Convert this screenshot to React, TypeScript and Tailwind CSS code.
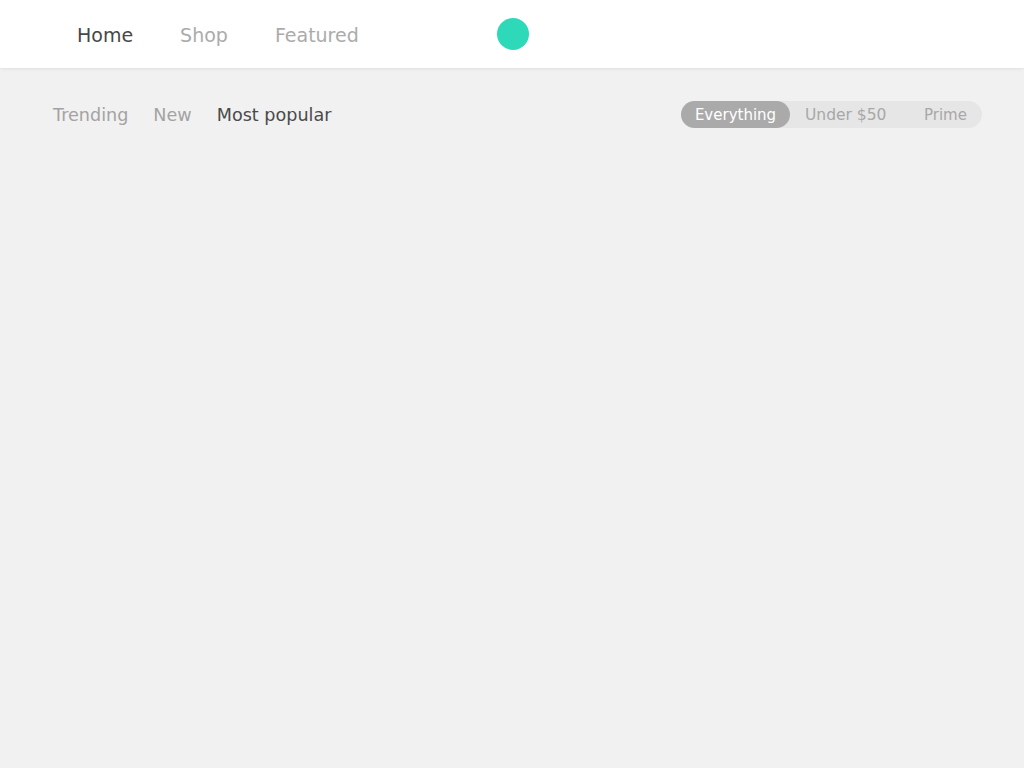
export default function App() {
  const font = { fontFamily: '"DejaVu Sans", "Liberation Sans", sans-serif' };
  return (
    <div className="min-h-screen w-full bg-[#f1f1f1]" style={font}>
      <header className="relative h-[68px] bg-white shadow-[0_1px_3px_rgba(0,0,0,0.08)] flex items-center pl-[77px]">
        <nav className="flex items-center gap-[47px] pt-[2px] text-[19px] leading-none">
          <a className="text-[#474747]">Home</a>
          <a className="text-[#ababab]">Shop</a>
          <a className="text-[#ababab]">Featured</a>
        </nav>
        <div className="ml-[138px] h-8 w-8 rounded-full bg-[#2dd9b9]" />
      </header>

      <div className="flex items-center justify-between pl-[53px] pr-[42px] pt-[33px]">
        <div className="flex items-center gap-[25px] pt-[2px] text-[17.6px] leading-none">
          <a className="text-[#a3a3a3]">Trending</a>
          <a className="text-[#a3a3a3]">New</a>
          <a className="text-[#4a4a4a]">Most popular</a>
        </div>
        <div className="flex h-[27px] items-center rounded-full bg-[#e6e6e6] text-[15px] leading-none">
          <button className="h-full w-[109px] rounded-full bg-[#aaaaaa] pt-[2px] text-white">Everything</button>
          <button className="h-full w-[115px] pl-[15px] pt-[2px] text-left text-[15.5px] text-[#a8a8a8]">Under $50</button>
          <button className="h-full w-[77px] pl-[19px] pt-[2px] text-left text-[#a8a8a8]">Prime</button>
        </div>
      </div>
    </div>
  );
}
